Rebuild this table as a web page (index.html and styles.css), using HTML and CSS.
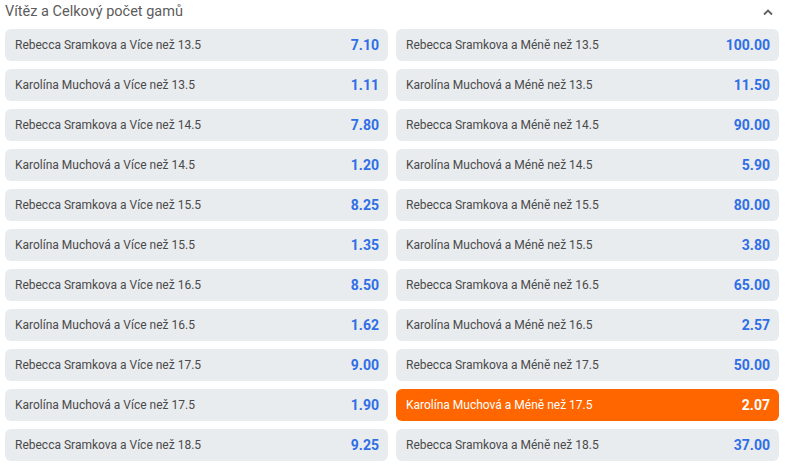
FILE: index.html
```html
<!DOCTYPE html>
<html lang="cs">
<head>
<meta charset="utf-8">
<link rel="stylesheet" href="styles.css">
</head>
<body>
<div class="market">
  <div class="market-header">
    <span class="market-title">Vítěz a Celkový počet gamů</span>
    <svg class="chevron" width="10" height="7" viewBox="0 0 10 7"><path d="M1 5.5 L5 1.5 L9 5.5" fill="none" stroke="#5f5f5f" stroke-width="1.8"/></svg>
  </div>
  <div class="grid">
    <div class="cell"><span class="label">Rebecca Sramkova a Více než 13.5</span><span class="odd">7.10</span></div>
    <div class="cell"><span class="label">Rebecca Sramkova a Méně než 13.5</span><span class="odd">100.00</span></div>
    <div class="cell"><span class="label">Karolína Muchová a Více než 13.5</span><span class="odd">1.11</span></div>
    <div class="cell"><span class="label">Karolína Muchová a Méně než 13.5</span><span class="odd">11.50</span></div>
    <div class="cell"><span class="label">Rebecca Sramkova a Více než 14.5</span><span class="odd">7.80</span></div>
    <div class="cell"><span class="label">Rebecca Sramkova a Méně než 14.5</span><span class="odd">90.00</span></div>
    <div class="cell"><span class="label">Karolína Muchová a Více než 14.5</span><span class="odd">1.20</span></div>
    <div class="cell"><span class="label">Karolína Muchová a Méně než 14.5</span><span class="odd">5.90</span></div>
    <div class="cell"><span class="label">Rebecca Sramkova a Více než 15.5</span><span class="odd">8.25</span></div>
    <div class="cell"><span class="label">Rebecca Sramkova a Méně než 15.5</span><span class="odd">80.00</span></div>
    <div class="cell"><span class="label">Karolína Muchová a Více než 15.5</span><span class="odd">1.35</span></div>
    <div class="cell"><span class="label">Karolína Muchová a Méně než 15.5</span><span class="odd">3.80</span></div>
    <div class="cell"><span class="label">Rebecca Sramkova a Více než 16.5</span><span class="odd">8.50</span></div>
    <div class="cell"><span class="label">Rebecca Sramkova a Méně než 16.5</span><span class="odd">65.00</span></div>
    <div class="cell"><span class="label">Karolína Muchová a Více než 16.5</span><span class="odd">1.62</span></div>
    <div class="cell"><span class="label">Karolína Muchová a Méně než 16.5</span><span class="odd">2.57</span></div>
    <div class="cell"><span class="label">Rebecca Sramkova a Více než 17.5</span><span class="odd">9.00</span></div>
    <div class="cell"><span class="label">Rebecca Sramkova a Méně než 17.5</span><span class="odd">50.00</span></div>
    <div class="cell"><span class="label">Karolína Muchová a Více než 17.5</span><span class="odd">1.90</span></div>
    <div class="cell selected"><span class="label">Karolína Muchová a Méně než 17.5</span><span class="odd">2.07</span></div>
    <div class="cell"><span class="label">Rebecca Sramkova a Více než 18.5</span><span class="odd">9.25</span></div>
    <div class="cell"><span class="label">Rebecca Sramkova a Méně než 18.5</span><span class="odd">37.00</span></div>
  </div>
</div>
</body>
</html>
```
FILE: styles.css
```css
html, body {
  margin: 0;
  padding: 0;
  background: #ffffff;
}
body {
  font-family: Roboto, "Liberation Sans", sans-serif;
}
.market {
  width: 774px;
  padding: 0 7px 0 5px;
}
.market-header {
  height: 29px;
  display: flex;
  align-items: flex-start;
  justify-content: space-between;
}
.market-title {
  font-size: 14.5px;
  line-height: 15px;
  margin-top: 4px;
  color: #5c5c5c;
}
.chevron {
  margin-top: 9px;
  margin-right: 6px;
}
.grid {
  display: grid;
  grid-template-columns: 1fr 1fr;
  column-gap: 8px;
  row-gap: 8px;
}
.cell {
  height: 32px;
  border-radius: 6px;
  background: #e9ecef;
  display: flex;
  align-items: center;
  justify-content: space-between;
  padding: 0 9px 0 10px;
}
.label {
  font-size: 12px;
  color: #4a4a4a;
}
.odd {
  font-size: 14px;
  font-weight: 700;
  color: #2f6ee6;
}
.cell.selected {
  background: #ff6600;
}
.cell.selected .label,
.cell.selected .odd {
  color: #ffffff;
}
```
